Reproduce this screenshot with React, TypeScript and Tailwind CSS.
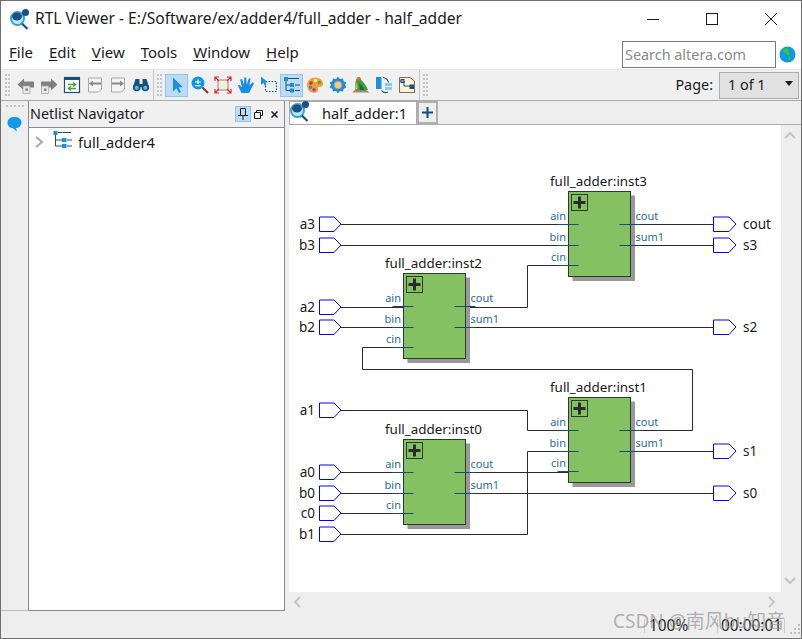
import React from "react";

const Logo = ({ className = "" }: { className?: string }) => (
  <svg className={className} width="22" height="22" viewBox="0 0 22 22">
    <circle cx="8.5" cy="10.5" r="6.5" fill="#bfe6f7" stroke="#2aa5dc" strokeWidth="2" />
    <ellipse cx="8" cy="8.5" rx="5" ry="4" fill="#1f4e86" />
    <circle cx="16.5" cy="4.5" r="3.5" fill="#1f4e86" />
    <path d="M13 15.5 L18.5 21" stroke="#17507e" strokeWidth="2.2" />
  </svg>
);

const Ico = ({ children }: { children: React.ReactNode }) => (
  <svg width="18" height="18" viewBox="0 0 18 18">{children}</svg>
);

const icons: Record<string, React.ReactNode> = {
  back: (
    <Ico>
      <path d="M0.5 8.5 L7 2.5 V5.5 H17 V11.5 H7 V14.5 Z" fill="#808080" />
      <rect x="6" y="10" width="7" height="7.5" fill="#e9e9e9" stroke="#a8a8a8" strokeWidth="0.8" />
      <rect x="8.5" y="12.5" width="2.4" height="2.4" fill="#808080" />
    </Ico>
  ),
  forward: (
    <Ico>
      <path d="M17.5 8.5 L11 2.5 V5.5 H1 V11.5 H11 V14.5 Z" fill="#808080" />
      <rect x="1.5" y="10" width="7" height="7.5" fill="#e9e9e9" stroke="#a8a8a8" strokeWidth="0.8" />
      <rect x="4" y="12.5" width="2.4" height="2.4" fill="#808080" />
    </Ico>
  ),
  refresh: (
    <Ico>
      <rect x="1.5" y="1.5" width="15" height="15" fill="#fff" stroke="#17507e" strokeWidth="1.2" />
      <rect x="1" y="1" width="16" height="3" fill="#17507e" />
      <path d="M5 8.5 H11.5 M10 6.5 L12.5 8.5 L10 10.5" fill="none" stroke="#46a83c" strokeWidth="1.5" />
      <path d="M13 12.5 H6.5 M8 10.5 L5.5 12.5 L8 14.5" fill="none" stroke="#46a83c" strokeWidth="1.5" />
    </Ico>
  ),
  pageBack: (
    <Ico>
      <path d="M2.5 2 H15.5 V13 L12.5 16 H2.5 Z" fill="#f4f4f4" stroke="#a8a8a8" />
      <path d="M3 7.5 L7 4.5 V6.5 H15 V8.5 H7 V10.5 Z" fill="#8a8a8a" />
    </Ico>
  ),
  pageFwd: (
    <Ico>
      <path d="M2.5 2 H15.5 V13 L12.5 16 H2.5 Z" fill="#f4f4f4" stroke="#a8a8a8" />
      <path d="M15 7.5 L11 4.5 V6.5 H3 V8.5 H11 V10.5 Z" fill="#8a8a8a" />
    </Ico>
  ),
  binoculars: (
    <Ico>
      <path d="M3.5 3 H7.5 V8 H10.5 V3 H14.5 L17 11 H1 Z" fill="#17507e" />
      <circle cx="4.7" cy="11.5" r="3.8" fill="#17507e" />
      <circle cx="13.3" cy="11.5" r="3.8" fill="#17507e" />
      <circle cx="4.7" cy="11.7" r="2" fill="#5fb6e8" />
      <circle cx="13.3" cy="11.7" r="2" fill="#5fb6e8" />
    </Ico>
  ),
  arrow: (
    <Ico>
      <path d="M5 1.5 V15.5 L8.5 12.2 L11 17 L13 16 L10.5 11.3 H15 Z" fill="#1a8fe0" />
    </Ico>
  ),
  zoom: (
    <Ico>
      <circle cx="7" cy="7" r="6.5" fill="#0b97e8" />
      <path d="M4 9.7 H10 M4 6 H10 M7 3.5 V8" stroke="#fff" strokeWidth="1.2" />
      <path d="M11.5 11.5 L17 17" stroke="#8c2f2f" strokeWidth="2" />
    </Ico>
  ),
  fit: (
    <Ico>
      <rect x="4" y="4" width="10" height="10" fill="#f8edd7" stroke="#8a8a8a" />
      <path d="M1 5 V1 H5 M1 1 L5 5 M13 1 H17 V5 M17 1 L13 5 M1 13 V17 H5 M1 17 L5 13 M17 13 V17 H13 M17 17 L13 13" fill="none" stroke="#e0272d" strokeWidth="1.2" />
    </Ico>
  ),
  hand: (
    <Ico>
      <path d="M4.5 17 L0.8 9.5 L2.5 8.8 L5 11.5 L3.2 3.5 L5 3 L7 8.5 L7.3 1.5 L9.2 1.5 L9.8 8.5 L11.8 2.3 L13.6 2.8 L12.3 9.5 L15.6 6.3 L17 7.6 L13.5 14 L12 17 Z" fill="#1a8fe0" />
    </Ico>
  ),
  marquee: (
    <Ico>
      <rect x="5.5" y="5.5" width="11" height="10" fill="none" stroke="#17507e" strokeWidth="1.2" strokeDasharray="1.5 1.5" />
      <path d="M1 0.5 V9 L3.2 7 L5 10 L6.5 9 L5 6.4 H8 Z" fill="#1a8fe0" />
    </Ico>
  ),
  tree: (
    <Ico>
      <path d="M2 2.5 H16 M3 5 V14.5 H9 M3 9 H9" fill="none" stroke="#17507e" strokeWidth="1" />
      <rect x="1" y="1" width="4" height="4" fill="#1a8fe0" />
      <rect x="7" y="7" width="4" height="4" fill="#1a8fe0" />
      <rect x="7" y="12.5" width="4" height="4" fill="#1a8fe0" />
      <path d="M12 9 H17 M12 14.5 H17" stroke="#17507e" strokeWidth="1" />
    </Ico>
  ),
  palette: (
    <Ico>
      <path d="M9 1.5 C13.5 1.5 17 4 17 8 C17 10.5 15 11 13.5 10.8 C12 10.7 11.5 12 12 13 C12.8 15 11 16.8 8.5 16.8 C4 16.8 1 13.5 1 9.2 C1 5 4.5 1.5 9 1.5 Z" fill="#f0a030" />
      <circle cx="5" cy="7" r="1.7" fill="#e0272d" />
      <circle cx="9.5" cy="4.5" r="1.7" fill="#f7e9c8" />
      <circle cx="4.5" cy="11.3" r="1.7" fill="#2a9ae0" />
      <circle cx="8" cy="13.8" r="1.7" fill="#d22a9a" />
      <circle cx="13.5" cy="6.3" r="1.6" fill="#3fae3f" />
    </Ico>
  ),
  gear: (
    <Ico>
      <path d="M9 0.8 L11 3 L14 2.4 L14.7 5.3 L17.4 6.5 L16 9 L17.4 11.5 L14.7 12.7 L14 15.6 L11 15 L9 17.2 L7 15 L4 15.6 L3.3 12.7 L0.6 11.5 L2 9 L0.6 6.5 L3.3 5.3 L4 2.4 L7 3 Z" fill="#1a8fe0" />
      <circle cx="9" cy="9" r="3.8" fill="#f2c98a" stroke="#c99a4e" strokeWidth="0.8" />
    </Ico>
  ),
  bird: (
    <Ico>
      <path d="M0.5 16.5 H17.5 L13.5 13.5 H3 Z" fill="#a08a76" />
      <path d="M3.5 14 C3 9 3.5 3.5 5 2 C7 0.5 9 1.5 9 4 C12.5 6.5 14.5 10.5 16 14 C12 14.5 8 14.5 3.5 14 Z" fill="#3d9a3d" />
      <path d="M5 2 C7 0.5 9 1.5 9 4 L5.5 5 Z" fill="#e0701f" />
      <path d="M7 7 C9 8.5 11 11 12 14 L8 14 Z" fill="#1f6a2f" />
      <path d="M5 5 L5.5 13 L3.5 13 Z" fill="#f0c030" />
    </Ico>
  ),
  swap: (
    <Ico>
      <rect x="1" y="1" width="5.5" height="12" fill="#1a8fe0" />
      <rect x="10" y="7" width="7" height="3" fill="#8ccbee" />
      <rect x="10" y="11" width="7" height="3" fill="#8ccbee" />
      <path d="M8 1.5 C11 2 13 4 13.5 6.5 M13 16 C10.5 17 8 16.5 6.5 14.5" fill="none" stroke="#17507e" strokeWidth="1.2" />
    </Ico>
  ),
  schematic: (
    <Ico>
      <path d="M1.5 1.5 H12 L16.5 5 V16.5 H1.5 Z" fill="#fbf0d8" stroke="#8a6a50" strokeWidth="1" />
      <path d="M2 5 H6 V10 H12" fill="none" stroke="#17507e" strokeWidth="1" />
      <rect x="3" y="3.5" width="3" height="3" fill="none" stroke="#17507e" />
      <rect x="11.5" y="8.5" width="4.5" height="4.5" fill="#17507e" />
    </Ico>
  ),
};

const Grip = ({ className = "" }: { className?: string }) => (
  <div className={`grid grid-cols-2 w-[5px] gap-y-[2px] gap-x-px ${className}`}>
    {Array.from({ length: 12 }).map((_, i) => (
      <span key={i} className="w-[2px] h-[2px] bg-[#c4c4c4]" />
    ))}
  </div>
);

const Tool = ({ name, active = false }: { name: string; active?: boolean }) => (
  <div
    className={`w-[23px] h-[23px] flex items-center justify-center ${
      active ? "bg-[#bcdcf5] border border-[#90c6ee]" : ""
    }`}
  >
    {icons[name]}
  </div>
);

const Menu = ({ first, rest }: { first: string; rest: string }) => (
  <span>
    <span className="underline underline-offset-2">{first}</span>
    {rest}
  </span>
);

const Chevron = ({ dir }: { dir: "up" | "down" | "left" | "right" }) => {
  const d = {
    up: "M1 8 L6 3 L11 8",
    down: "M1 3 L6 8 L11 3",
    left: "M8 1 L3 6 L8 11",
    right: "M3 1 L8 6 L3 11",
  }[dir];
  return (
    <svg width="12" height="12" viewBox="0 0 12 12">
      <path d={d} fill="none" stroke="#c4c4c4" strokeWidth="2" />
    </svg>
  );
};

const W = "#2b2b2b";

const Input = ({ y, label }: { y: number; label: string }) => (
  <g>
    <path
      d={`M319.5 ${y - 7} H334 L341 ${y} L334 ${y + 7.5} H319.5 Z`}
      fill="#fff"
      stroke="#0000ff"
      strokeWidth="1"
    />
    <text x="315" y={y + 4.5} textAnchor="end" fontSize="13.5" fill="#1a1a1a">
      {label}
    </text>
  </g>
);

const Output = ({ y, label }: { y: number; label: string }) => (
  <g>
    <path
      d={`M713.5 ${y - 7} H729 L736 ${y} L729 ${y + 7.5} H713.5 Z`}
      fill="#fff"
      stroke="#0000ff"
      strokeWidth="1"
    />
    <text x="743" y={y + 4.5} fontSize="13.5" fill="#1a1a1a">
      {label}
    </text>
  </g>
);

const Block = ({ x, y, name }: { x: number; y: number; name: string }) => {
  const portY = [33, 54, 74];
  const ports = ["ain", "bin", "cin"];
  const outs = ["cout", "sum1"];
  return (
    <g>
      <text x={x - 18} y={y - 5.5} fontSize="13.4" fill="#1a1a1a">
        {name}
      </text>
      <rect x={x + 4.5} y={y + 4.5} width="62.5" height="85.5" fill="#999999" />
      <rect x={x + 0.5} y={y + 0.5} width="62" height="85" fill="#85c062" stroke="#2b3a2b" strokeWidth="1" />
      <rect x={x + 3.5} y={y + 3.5} width="16" height="16" fill="none" stroke="#2b3a2b" strokeWidth="1" />
      <path d={`M${x + 11.5} ${y + 5.5} V${y + 17.5} M${x + 5.5} ${y + 11.5} H${x + 17.5}`} stroke="#2b2b2b" strokeWidth="3" />
      {ports.map((p, i) => (
        <g key={p}>
          <path d={`M${x - 10.5} ${y + portY[i] + 0.5} H${x + 10.5}`} stroke="#0f4f7a" strokeWidth="1" />
          <text x={x - 2} y={y + portY[i] - 4} textAnchor="end" fontSize="11" fill="#2a6aa0">
            {p}
          </text>
        </g>
      ))}
      {outs.map((p, i) => (
        <g key={p}>
          <path d={`M${x + 51.5} ${y + portY[i] + 0.5} H${x + 72.5}`} stroke="#0f4f7a" strokeWidth="1" />
          <text x={x + 67.5} y={y + portY[i] - 4} fontSize="11" fill="#2a6aa0">
            {p}
          </text>
        </g>
      ))}
    </g>
  );
};

const Schematic = () => (
  <svg
    className="block"
    width="492"
    height="467"
    viewBox="289 125 492 467"
    style={{ fontFamily: '"Noto Sans", sans-serif' }}
  >
    <g fill="none" stroke={W} strokeWidth="1">
      <path d="M341 224.5 H600" />
      <path d="M341 245.5 H600" />
      <path d="M341 307.5 H414" />
      <path d="M341 327.5 H414" />
      <path d="M455 307.5 H527.5 V265.5 H580" />
      <path d="M455 327.5 H714" />
      <path d="M620 224.5 H714" />
      <path d="M620 245.5 H714" />
      <path d="M414 347.5 H362.5 V369.5 H692.5 V430.5 H620" />
      <path d="M341 410.5 H527.5 V430.5 H580" />
      <path d="M341 472.5 H414" />
      <path d="M341 493.5 H414" />
      <path d="M341 513.5 H414" />
      <path d="M341 534.5 H527.5 V451.5 H580" />
      <path d="M455 472.5 H580" />
      <path d="M455 493.5 H714" />
      <path d="M620 451.5 H714" />
    </g>
    <Block x={568} y={191} name="full_adder:inst3" />
    <Block x={403} y={273} name="full_adder:inst2" />
    <Block x={568} y={397} name="full_adder:inst1" />
    <Block x={403} y={439} name="full_adder:inst0" />
    <Input y={224} label="a3" />
    <Input y={245} label="b3" />
    <Input y={307} label="a2" />
    <Input y={327} label="b2" />
    <Input y={410} label="a1" />
    <Input y={472} label="a0" />
    <Input y={493} label="b0" />
    <Input y={513} label="c0" />
    <Input y={534} label="b1" />
    <Output y={224} label="cout" />
    <Output y={245} label="s3" />
    <Output y={327} label="s2" />
    <Output y={451} label="s1" />
    <Output y={493} label="s0" />
  </svg>
);

export default function App() {
  return (
    <div
      className="relative w-[802px] h-[639px] flex flex-col overflow-hidden border border-[#6e6e6e] bg-[#eeeeee] text-[#1a1a1a]"
      style={{ fontFamily: '"Noto Sans", "Noto Sans CJK SC", sans-serif' }}
    >
      {/* Title bar */}
      <div className="h-[35px] shrink-0 bg-white flex items-center">
        <Logo className="ml-[8px] mr-[4px]" />
        <span className="text-[15.6px] leading-none">RTL Viewer - E:/Software/ex/adder4/full_adder - half_adder</span>
        <div className="ml-auto flex items-center">
          <svg width="14" height="14" viewBox="0 0 14 14" className="mr-[45px]">
            <path d="M1 7.5 H13" stroke="#1a1a1a" />
          </svg>
          <svg width="14" height="14" viewBox="0 0 14 14" className="mr-[45px]">
            <rect x="1.5" y="1.5" width="11" height="11" fill="none" stroke="#1a1a1a" />
          </svg>
          <svg width="14" height="14" viewBox="0 0 14 14" className="mr-[23px]">
            <path d="M1 1 L13 13 M13 1 L1 13" stroke="#1a1a1a" />
          </svg>
        </div>
      </div>
      {/* Menu bar */}
      <div className="h-[34px] shrink-0 bg-white flex items-center pl-[8px] border-b border-[#e8e8e8]">
        <div className="flex gap-4 text-[15px] leading-none -mt-[1px]">
          <Menu first="F" rest="ile" />
          <Menu first="E" rest="dit" />
          <Menu first="V" rest="iew" />
          <Menu first="T" rest="ools" />
          <Menu first="W" rest="indow" />
          <Menu first="H" rest="elp" />
        </div>
        <div className="ml-auto mr-[5px] flex items-center gap-[3px] mt-[4px]">
          <div className="w-[154px] h-[27px] border border-[#7a7a7a] bg-white flex items-center pl-[2px] text-[14.4px] text-[#8a8a8a]">
            Search altera.com
          </div>
          <svg width="17" height="17" viewBox="0 0 17 17">
            <circle cx="8.5" cy="8.5" r="8" fill="#0d9be8" />
            <path d="M4 3.5 C6 1.5 9 2 9.5 4 C9.5 6 11.5 7 10 9 C8.5 10.5 8 8 6.5 7.5 C5 7 3.5 5.5 4 3.5 Z" fill="#35c43a" />
            <path d="M9.5 10.5 C11 10 12 11 11.5 13 C11 14.5 9.5 15 9.5 13 Z" fill="#35c43a" />
          </svg>
        </div>
      </div>
      {/* Toolbar */}
      <div className="h-[31px] shrink-0 bg-[#f0f0f0] border-b border-[#aaaaaa] flex items-center">
        <Grip className="ml-[4px] mr-[4px]" />
        <div className="flex w-[138px]">
          {["back", "forward", "refresh", "pageBack", "pageFwd", "binoculars"].map((n) => (
            <Tool key={n} name={n} />
          ))}
        </div>
        <div className="w-px h-[30px] bg-[#c8c8c8] ml-px" />
        <Grip className="ml-[3px] mr-[3px]" />
        <div className="flex">
          <Tool name="arrow" active />
          <Tool name="zoom" />
          <Tool name="fit" />
          <Tool name="hand" />
          <Tool name="marquee" />
          <Tool name="tree" active />
          <Tool name="palette" />
          <Tool name="gear" />
          <Tool name="bird" />
          <Tool name="swap" />
          <Tool name="schematic" />
        </div>
        <div className="w-px h-[30px] bg-[#c8c8c8] ml-[1px]" />
        <Grip className="ml-[3px]" />
        <span className="ml-auto text-[14.4px] mr-[6px]">Page:</span>
        <div className="w-[80px] h-[27px] mr-[2px] bg-[#e1e1e1] border border-[#adadad] flex items-center justify-between pl-[8px] pr-[5px] text-[14.4px]">
          <span>1 of 1</span>
          <svg width="8" height="5" viewBox="0 0 8 5" className="mb-[3px]">
            <path d="M0 0 H8 L4 5 Z" fill="#1a1a1a" />
          </svg>
        </div>
      </div>
      {/* Main */}
      <div className="flex-1 min-h-0 flex">
        <div className="w-[27px] shrink-0 flex flex-col items-center border-b border-[#bdbdbd] mb-px">
          <div className="mt-[4px] flex gap-[2px]">
            {Array.from({ length: 5 }).map((_, i) => (
              <span key={i} className="w-[2px] h-[2px] bg-[#c4c4c4]" />
            ))}
          </div>
          <svg width="15" height="16" viewBox="0 0 15 16" className="mt-[9px]">
            <path d="M7.5 1 C11.5 1 14.5 3 14.5 6.5 C14.5 10 11.5 12 9 12 L10 15.5 L5.5 12 C2.5 12 0.5 9.8 0.5 6.5 C0.5 3 3.5 1 7.5 1 Z" fill="#109ae8" />
          </svg>
        </div>
        <div className="w-[257px] shrink-0 flex flex-col border-x border-b border-[#8a8a94] mb-px">
          <div className="h-[27px] shrink-0 flex items-center border-b border-[#8a8a94] bg-[#f0f0f0]">
            <span className="ml-[1px] text-[14.4px] leading-none">Netlist Navigator</span>
            <div className="ml-auto w-[16px] h-[16px] bg-[#bcdcf5] border border-[#90c6ee] flex items-center justify-center">
              <svg width="10" height="12" viewBox="0 0 10 12">
                <path d="M2.5 0.5 H7.5 V7.5 H2.5 Z M0 7.5 H10 M5 8 V12" fill="none" stroke="#1a1a1a" />
              </svg>
            </div>
            <svg width="9" height="9" viewBox="0 0 9 9" className="ml-[3px]">
              <path d="M2.5 2.5 V0.5 H8.5 V5.5 H6.5 M0.5 2.5 H6.5 V8.5 H0.5 Z" fill="none" stroke="#1a1a1a" />
            </svg>
            <svg width="7" height="7" viewBox="0 0 7 7" className="ml-[8px] mr-[6px]">
              <path d="M0.5 0.5 L6.5 6.5 M6.5 0.5 L0.5 6.5" stroke="#1a1a1a" strokeWidth="1.5" />
            </svg>
          </div>
          <div className="flex-1 bg-white pt-[3px] pl-[6px] flex items-start">
            <svg width="9" height="12" viewBox="0 0 9 12" className="mt-[5px]">
              <path d="M1 1 L7 6 L1 11" fill="none" stroke="#a8a8a8" strokeWidth="2" />
            </svg>
            <svg width="20" height="18" viewBox="0 0 20 18" className="ml-[9px]">
              <rect x="0.5" y="0" width="4" height="4" fill="#1a8fe0" />
              <path d="M2.5 4 V15 H9 M2.5 9 H9 M5 1.5 H18 M14 9 H19 M14 15 H19" fill="none" stroke="#17507e" />
              <rect x="9" y="7" width="4.5" height="4" fill="#1a8fe0" />
              <rect x="9" y="13" width="4.5" height="4" fill="#1a8fe0" />
            </svg>
            <span className="ml-[5px] text-[14.6px] leading-[22px]">full_adder4</span>
          </div>
        </div>
        <div className="w-[4px] shrink-0" />
        <div className="flex-1 min-w-0 flex flex-col">
          <div className="h-[24px] shrink-0 border-b border-[#aaaaaa] flex items-end">
            <div className="w-[128px] h-[23px] bg-white border-x border-t border-[#aaaaaa] flex items-center relative">
              <Logo className="absolute -left-[1px] -top-[2px]" />
              <span className="ml-[32px] text-[14.6px] leading-none">half_adder:1</span>
            </div>
            <div className="w-[21px] h-[23px] border-2 border-[#b0b0b0] flex items-center justify-center">
              <svg width="11" height="11" viewBox="0 0 11 11">
                <path d="M5.5 0 V11 M0 5.5 H11" stroke="#0b4f8a" strokeWidth="2" />
              </svg>
            </div>
          </div>
          <div className="flex h-[467px]">
            <div className="w-[492px] bg-white">
              <Schematic />
            </div>
            <div className="flex-1 flex flex-col items-center justify-between py-[5px] pr-[2px]">
              <Chevron dir="up" />
              <Chevron dir="down" />
            </div>
          </div>
          <div className="flex-1 w-[492px] flex items-center justify-between px-[3px]">
            <Chevron dir="left" />
            <Chevron dir="right" />
          </div>
        </div>
      </div>
      {/* Status bar */}
      <div className="h-[26px] shrink-0 bg-[#eeeeee] flex items-center justify-end pt-[2px] text-[15.4px]">
        <span className="w-px h-[14px] bg-[#c8c8c8] mr-[4px]" />
        <span className="leading-none w-[68px]">100%</span>
        <span className="w-px h-[14px] bg-[#c8c8c8] mr-[3px]" />
        <span className="leading-none w-[63px]">00:00:01</span>
        <span className="w-px h-[14px] bg-[#c8c8c8] mr-[5px]" />
        <div className="grid grid-cols-3 gap-[2px] w-[10px] mt-[6px] mr-[1px]">
          <span />
          <span />
          <span className="w-[2px] h-[2px] bg-[#bdbdbd]" />
          <span />
          <span className="w-[2px] h-[2px] bg-[#bdbdbd]" />
          <span className="w-[2px] h-[2px] bg-[#bdbdbd]" />
          <span className="w-[2px] h-[2px] bg-[#bdbdbd]" />
          <span className="w-[2px] h-[2px] bg-[#bdbdbd]" />
          <span className="w-[2px] h-[2px] bg-[#bdbdbd]" />
        </div>
      </div>
      {/* Watermark */}
      <div className="absolute left-[612px] top-[608px] text-[19px] leading-[24px] text-[#9a9a9a]/75 whitespace-nowrap">
        CSDN @南风bu知音
      </div>
    </div>
  );
}
